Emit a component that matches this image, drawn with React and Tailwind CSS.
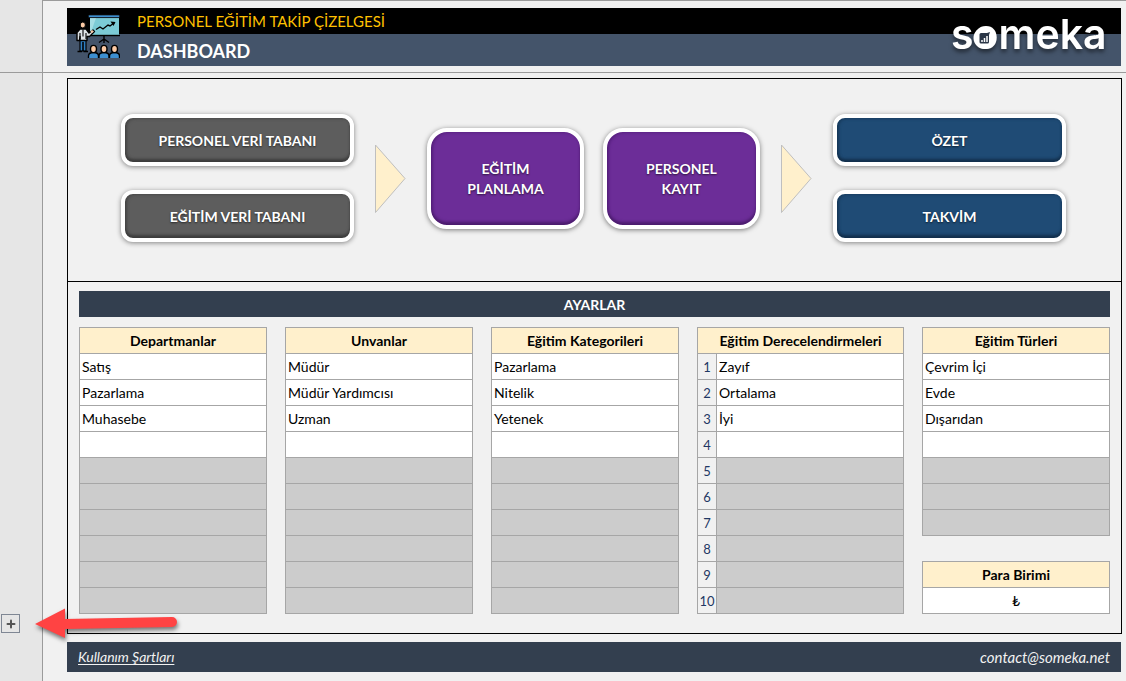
import React from 'react';
import { Plus } from 'lucide-react';
import clsx from 'clsx';

const departments = ['Satış', 'Pazarlama', 'Muhasebe', ''];
const titles = ['Müdür', 'Müdür Yardımcısı', 'Uzman', ''];
const categories = ['Pazarlama', 'Nitelik', 'Yetenek', ''];
const ratings = ['Zayıf', 'Ortalama', 'İyi', ''];
const types = ['Çevrim İçi', 'Evde', 'Dışarıdan', ''];

const TrainingIcon = () => (
  <svg width="44" height="46" viewBox="0 0 44 46" className="shrink-0" aria-hidden="true">
    {/* Board */}
    <rect x="14" y="4" width="29" height="17.5" fill="#7ccbd6" />
    <path d="M14 21V4h6z" fill="#a5dde4" />
    <rect x="12.5" y="1" width="31" height="2.6" rx="0.8" fill="#3d8fd1" stroke="#111" strokeWidth="0.7" />
    <path d="M15 21.5h29" stroke="#000" strokeWidth="1.4" />
    <path d="M20 15.5l4-2.5 3 2 5-4 2 1 4.5-3.5" fill="none" stroke="#000" strokeWidth="1.4" />
    <path d="M34.5 7.5l5 .5-2 4z" fill="#000" />
    <path d="M28 22v7M28 25l-5 3.5M28 25l5 3.5" fill="none" stroke="#000" strokeWidth="1.4" />
    {/* Speaker */}
    <path d="M4 26h6v11H4z" fill="#2f7fc2" stroke="#000" strokeWidth="1.2" />
    <path d="M7 28v9M1.5 37.5H6M7.5 37.5H12" stroke="#000" strokeWidth="1.6" />
    <path
      d="M4 15h6l3 4 4-3 1.5 1.5-5 5H11v4H4v-4l-.5 4H1v-8z"
      fill="#dfe3e6"
      stroke="#000"
      strokeWidth="1.4"
      strokeLinejoin="round"
    />
    <path d="M7 15.5v7M4 19v6M10 19v6" stroke="#000" strokeWidth="1.1" />
    <ellipse cx="6.8" cy="11" rx="2.6" ry="3" fill="#fbc9a4" stroke="#000" strokeWidth="1" />
    <circle cx="16" cy="17.5" r="1.3" fill="#fbc9a4" />
    {/* Audience */}
    {[17.5, 28, 38.5].map((x) => (
      <g key={x} stroke="#000" strokeWidth="1.4">
        <path d={`M${x - 5} 44v-2q0-3.500 5-3.500t5 3.500V44`} fill="#3d8fd1" />
        <ellipse cx={x} cy="35" rx="3" ry="3.6" fill="#fbc9a4" />
      </g>
    ))}
  </svg>
);

const Logo = () => (
  <svg width="174" height="56" viewBox="0 0 174 56" className="shrink-0" role="img" aria-label="someka">
    <g className="drop-shadow-[0_3px_2px_rgba(0,0,0,0.5)]">
      <text x="4" y="41" fontFamily="Inter, sans-serif" fontSize="41" fontWeight="600" fill="#fff">
        someka
      </text>
      <circle cx="37.5" cy="30" r="11" fill="#fff" />
    </g>
    <path d="M32.5 26.5q0-1.500 1.500-1.500h6l3-1-1 3v7q0 1.500-1.500 1.500H34q-1.500 0-1.500-1.500z" fill="#2b3647" />
    <path d="M35 34v-2M37.5 34v-4M40 34v-6" stroke="#fff" strokeWidth="1.5" />
  </svg>
);

const Arrow = () => (
  <svg width="31" height="70" viewBox="0 0 31 70" className="shrink-0" aria-hidden="true">
    <path d="M.5 2v67.500L30 35.500z" fill="#fff0cc" stroke="#bfbfbf" />
  </svg>
);

const NavButton = ({ className, children }) => (
  <button
    className={clsx(
      'shrink-0 border-4 border-white pt-0.5 text-sm leading-5 font-bold text-white [text-shadow:0_1px_2px_rgba(0,0,0,0.6)]',
      className
    )}
  >
    {children}
  </button>
);

const SettingsTable = ({ title, items, rows, numbered }) => (
  <table className="w-full table-fixed border-collapse text-sm leading-4 text-black">
    {numbered && (
      <colgroup>
        <col className="w-[19px]" />
        <col />
      </colgroup>
    )}
    <thead>
      <tr>
        <th colSpan={numbered ? 2 : 1} className="h-[26px] border border-[#a6a6a6] bg-[#fff0cc] p-0 font-bold">
          {title}
        </th>
      </tr>
    </thead>
    <tbody>
      {Array.from({ length: rows }, (_, i) => (
        <tr key={i}>
          {numbered && (
            <td className="h-[26px] border border-[#a6a6a6] p-0 text-center text-[13px] text-[#1f3864]">{i + 1}</td>
          )}
          <td
            className={clsx(
              'h-[26px] border border-[#a6a6a6] px-0.5 py-0',
              i < items.length ? 'bg-white' : 'bg-[#cccccc]'
            )}
          >
            {items[i]}
          </td>
        </tr>
      ))}
    </tbody>
  </table>
);

const darkButton =
  'h-[52px] w-[233px] rounded-xl bg-[#5d5d5d] shadow-[0_1px_5px_rgba(0,0,0,0.45),inset_0_-3px_3px_#3c3c3c,inset_2px_1px_3px_#4a4a4a]';
const purpleButton =
  'h-[101px] w-[157px] rounded-[20px] bg-[#6c2d98] px-6 shadow-[0_1px_5px_rgba(0,0,0,0.5),inset_0_-3px_3px_#4b1c6d,inset_2px_1px_3px_#5a2282]';
const blueButton =
  'h-[52px] w-[233px] rounded-xl bg-[#1f4b75] shadow-[0_1px_5px_rgba(0,0,0,0.45),inset_0_-3px_3px_#122f4c,inset_2px_1px_3px_#183d60]';

const App = () => {
  return (
    <div className="relative flex min-h-screen flex-col bg-[#f1f1f1] font-[Lato,'Noto_Sans',sans-serif]">
      {/* Header */}
      <div className="flex border-b border-[#9b9b9b]">
        <div className="w-[43px] shrink-0 border-r border-[#9b9b9b] bg-[#e6e6e6]" />
        <div className="flex-1 border-t border-[#9b9b9b] pt-[7px] pr-[5px] pb-1.5 pl-6">
          <header className="flex h-[58px] items-start bg-[linear-gradient(#000_26px,#44546a_26px)] pl-[9px]">
            <div className="pt-1.5">
              <TrainingIcon />
            </div>
            <div className="flex-1 pl-[17px]">
              <p className="text-[15px] leading-[26px] text-[#ffc000]">PERSONEL EĞİTİM TAKİP ÇİZELGESİ</p>
              <h1 className="text-lg leading-[34px] font-bold text-white">DASHBOARD</h1>
            </div>
            <Logo />
          </header>
        </div>
      </div>

      <div className="flex flex-1">
        {/* Outline gutter */}
        <div className="flex w-[43px] shrink-0 flex-col justify-end border-r border-[#9b9b9b] bg-[#e6e6e6] pb-12 pl-px">
          <button
            aria-label="Expand"
            className="flex h-[19px] w-[19px] items-center justify-center border border-[#7f8794] text-[#555555]"
          >
            <Plus size={12} strokeWidth={4} />
          </button>
        </div>

        <div className="flex-1 pt-[5px] pr-1 pb-[9px] pl-6">
          <main className="border border-black">
            {/* Navigation */}
            <nav className="flex items-center justify-center gap-[21px] border-b border-black pt-[35px] pr-0.5 pb-[39px]">
              <div className="flex flex-col gap-6">
                <NavButton className={darkButton}>PERSONEL VERİ TABANI</NavButton>
                <NavButton className={darkButton}>EĞİTİM VERİ TABANI</NavButton>
              </div>
              <Arrow />
              <div className="flex gap-[19px]">
                <NavButton className={purpleButton}>EĞİTİM PLANLAMA</NavButton>
                <NavButton className={purpleButton}>PERSONEL KAYIT</NavButton>
              </div>
              <Arrow />
              <div className="flex flex-col gap-6">
                <NavButton className={blueButton}>ÖZET</NavButton>
                <NavButton className={blueButton}>TAKVİM</NavButton>
              </div>
            </nav>

            {/* Settings */}
            <section className="px-[11px] pt-[9px] pb-[19px]">
              <h2 className="bg-[#333f4f] pt-0.5 text-center text-sm leading-6 font-bold text-white">AYARLAR</h2>
              <div className="mt-2.5 grid grid-cols-[188fr_188fr_188fr_207fr_188fr] items-start gap-[18px]">
                <SettingsTable title="Departmanlar" items={departments} rows={10} />
                <SettingsTable title="Unvanlar" items={titles} rows={10} />
                <SettingsTable title="Eğitim Kategorileri" items={categories} rows={10} />
                <SettingsTable title="Eğitim Derecelendirmeleri" items={ratings} rows={10} numbered />
                <div className="flex flex-col gap-[25px]">
                  <SettingsTable title="Eğitim Türleri" items={types} rows={7} />
                  <table className="w-full border-collapse text-sm leading-4 text-black">
                    <thead>
                      <tr>
                        <th className="h-[26px] border border-[#a6a6a6] bg-[#fff0cc] p-0 font-bold">Para Birimi</th>
                      </tr>
                    </thead>
                    <tbody>
                      <tr>
                        <td className="h-[26px] border border-[#a6a6a6] bg-white p-0 text-center">₺</td>
                      </tr>
                    </tbody>
                  </table>
                </div>
              </div>
            </section>
          </main>

          {/* Footer */}
          <footer className="mt-2 mr-px flex h-[30px] items-center justify-between bg-[#333f4f] px-[11px] text-[#f2f2f2] italic">
            <a href="#" className="text-sm underline underline-offset-2">
              Kullanım Şartları
            </a>
            <a href="mailto:contact@someka.net" className="text-[15px]">
              contact@someka.net
            </a>
          </footer>
        </div>
      </div>

      {/* Pointer to the expand button */}
      <svg
        width="150"
        height="40"
        viewBox="0 0 150 40"
        className="pointer-events-none absolute bottom-[37px] left-8 drop-shadow-[1px_3px_2px_rgba(0,0,0,0.5)]"
        aria-hidden="true"
      >
        <path d="M3 20L33 4.500V15L140 13a5 5 0 0 1 0 10L33 25V34z" fill="#ff4343" />
      </svg>
    </div>
  );
};

export default App;
